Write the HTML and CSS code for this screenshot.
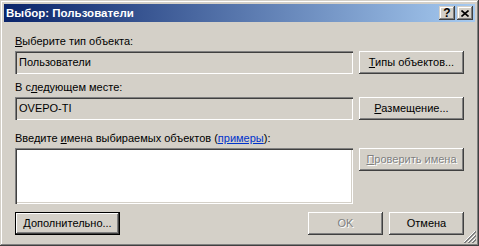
FILE: index.html
```html
<!DOCTYPE html>
<html lang="ru">
<head>
    <meta charset="UTF-8">
    <title>Выбор: Пользователи</title>
    <link rel="stylesheet" href="styles.css">
</head>
<body>

    <div class="window">
        <div class="titlebar">
            <span class="title">Выбор: Пользователи</span>
            <div class="caption-buttons">
                <span class="cap-btn help">?</span>
                <span class="cap-btn">
                    <svg width="8" height="7" viewBox="0 0 8 7">
                        <path d="M0.5 0.5 L7.5 6.5 M7.5 0.5 L0.5 6.5" stroke="#000" stroke-width="1.6" fill="none"/>
                    </svg>
                </span>
            </div>
        </div>

        <div class="content">
            <div class="label"><u>В</u>ыберите тип объекта:</div>
            <div class="row">
                <div class="field">Пользователи</div>
                <button class="btn" type="button"><u>Т</u>ипы объектов...</button>
            </div>

            <div class="label label-gap">В с<u>л</u>едующем месте:</div>
            <div class="row">
                <div class="field">OVEPO-TI</div>
                <button class="btn" type="button"><u>Р</u>азмещение...</button>
            </div>

            <div class="label label-gap-lg">Введите <u>и</u>мена выбираемых объектов (<a class="link" href="#">примеры</a>):</div>
            <div class="row row-top">
                <div class="field names"></div>
                <button class="btn" type="button" disabled><u>П</u>роверить имена</button>
            </div>

            <div class="actions">
                <button class="btn btn-default" type="button"><u>Д</u>ополнительно...</button>
                <div class="dialog-buttons">
                    <button class="btn btn-small" type="button" disabled>OK</button>
                    <button class="btn btn-small" type="button">Отмена</button>
                </div>
            </div>
        </div>

        <!-- size grip -->
        <svg class="grip" width="12" height="12" viewBox="0 0 12 12" shape-rendering="crispEdges">
            <path d="M11 0 L0 11" stroke="#fff"/>
            <path d="M12 0 L0 12 M12 1 L1 12" stroke="#808080"/>
            <path d="M11 4 L4 11" stroke="#fff"/>
            <path d="M12 4 L4 12 M12 5 L5 12" stroke="#808080"/>
            <path d="M11 8 L8 11" stroke="#fff"/>
            <path d="M12 8 L8 12 M12 9 L9 12" stroke="#808080"/>
        </svg>
    </div>

</body>
</html>
```

FILE: styles.css
```css
* {
    box-sizing: border-box;
}
body {
    margin: 0;
    background: #d4d0c8;
    font-family: "Liberation Sans", Arial, sans-serif;
    font-size: 11px;
    line-height: 13px;
    color: #000;
}
.window {
    position: relative;
    width: 479px;
    height: 246px;
    padding: 4px;
    background: #d4d0c8;
    box-shadow: inset -1px -1px #404040, inset 1px 1px #d4d0c8,
                inset -2px -2px #808080, inset 2px 2px #fff;
    display: flex;
    flex-direction: column;
}
.titlebar {
    height: 18px;
    display: flex;
    align-items: center;
    padding: 0 2px 0 2px;
    background: linear-gradient(to right, #0a246a, #a6caf0);
    color: #fff;
    font-weight: bold;
    font-size: 11.5px;
}
.title {
    flex: 1;
}
.caption-buttons {
    display: flex;
    gap: 2px;
}
.cap-btn {
    width: 16px;
    height: 14px;
    display: flex;
    align-items: center;
    justify-content: center;
    background: #d4d0c8;
    color: #000;
    font-size: 12px;
    box-shadow: inset -1px -1px #404040, inset 1px 1px #d4d0c8,
                inset -2px -2px #808080, inset 2px 2px #fff;
}
.cap-btn.help {
    padding-top: 1px;
}
.content {
    padding: 13px 11px 0 11px;
}
.label-gap {
    margin-top: 7px;
}
.label-gap-lg {
    margin-top: 12px;
}
.row {
    display: grid;
    grid-template-columns: 338px 105px;
    column-gap: 6px;
    align-items: start;
    margin-top: 3px;
}
.field {
    height: 23px;
    display: flex;
    align-items: center;
    padding: 0 4px;
    background: #d4d0c8;
    box-shadow: inset 1px 1px #808080, inset 2px 2px #404040,
                inset -1px -1px #fff, inset -2px -2px #d4d0c8;
}
.field.names {
    height: 56px;
    background: #fff;
}
.btn {
    height: 23px;
    padding: 0;
    border: none;
    background: #d4d0c8;
    font: inherit;
    color: #000;
    box-shadow: inset -1px -1px #404040, inset 1px 1px #fff,
                inset -2px -2px #808080, inset 2px 2px #d4d0c8;
}
.btn:disabled {
    color: #808080;
    text-shadow: 1px 1px #fff;
}
.btn-default {
    width: 105px;
    box-shadow: inset 0 0 0 1px #000, inset -2px -2px #404040,
                inset 2px 2px #fff, inset -3px -3px #808080;
}
.btn-small {
    width: 75px;
}
.actions {
    display: flex;
    justify-content: space-between;
    margin-top: 8px;
}
.dialog-buttons {
    display: flex;
    gap: 6px;
}
.link {
    color: #0033cc;
}
.grip {
    position: absolute;
    right: 3px;
    bottom: 3px;
}
```
